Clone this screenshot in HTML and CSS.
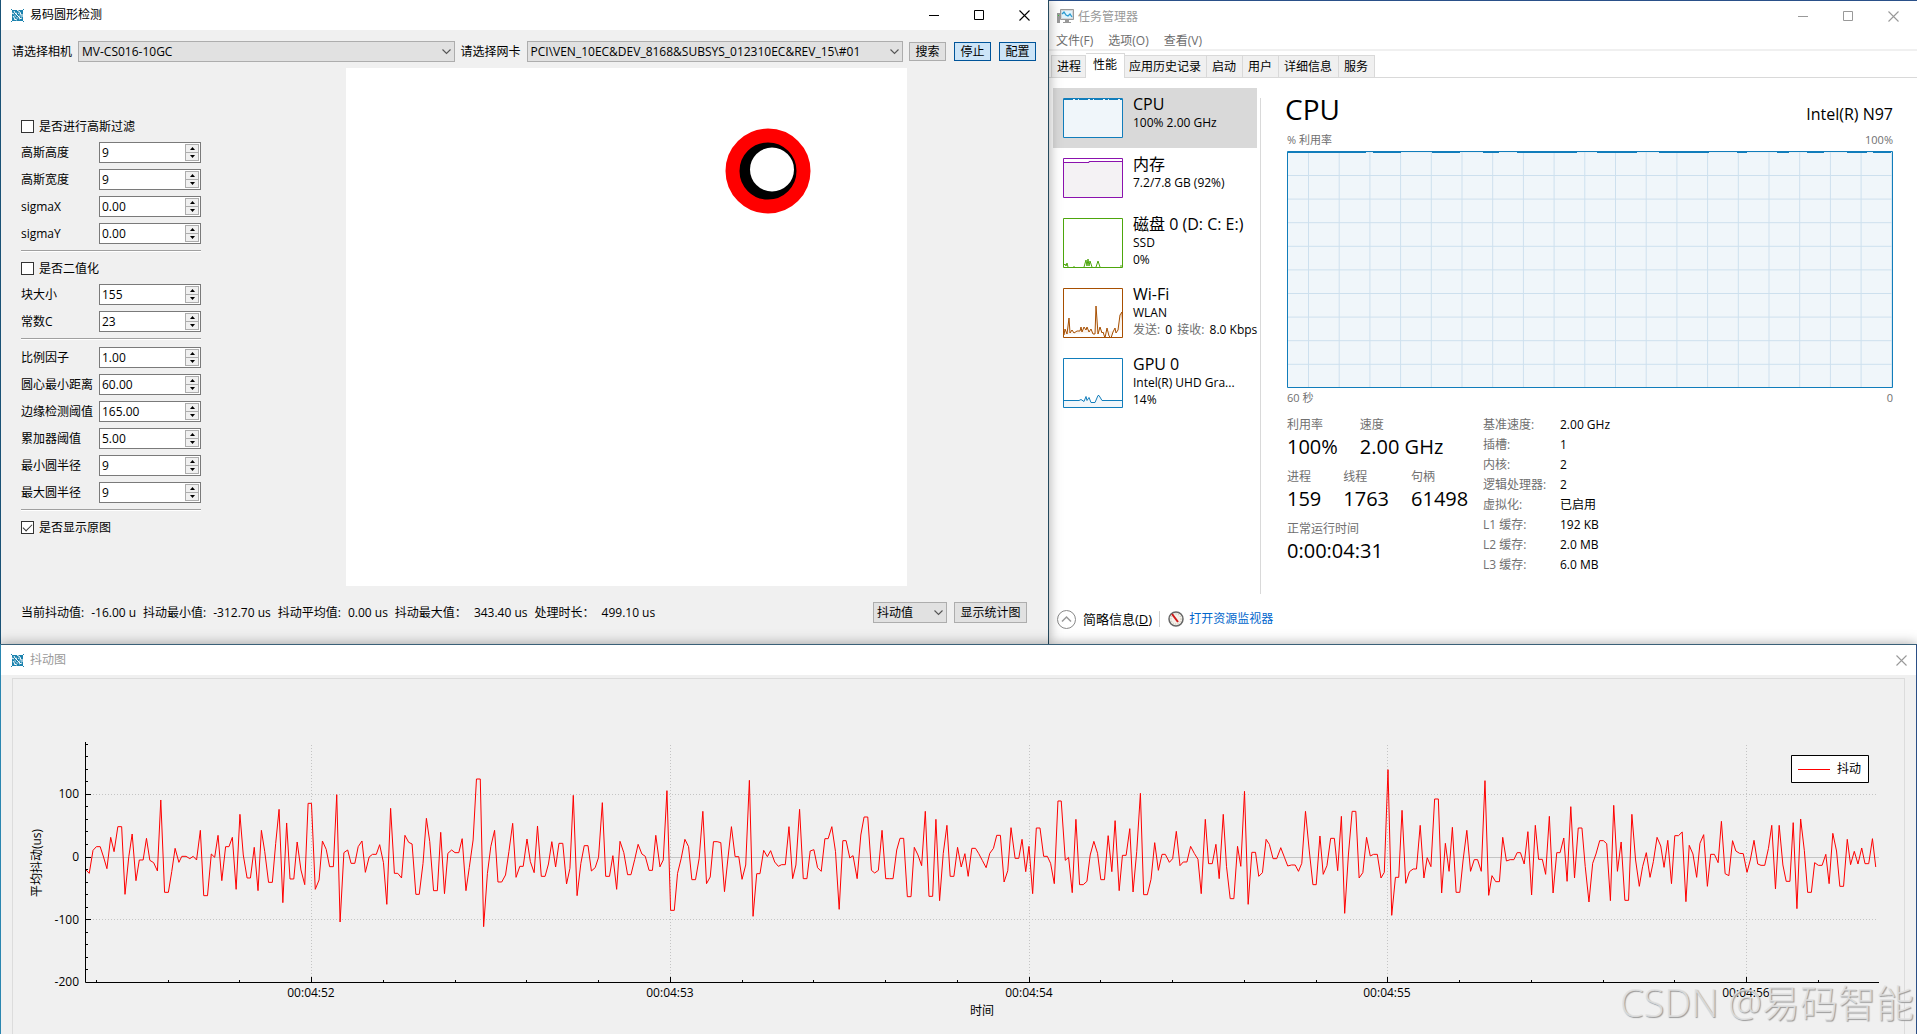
FILE: index.html
```html
<!DOCTYPE html>
<html lang="zh-CN">
<head>
<meta charset="utf-8">
<title>易码圆形检测</title>
<link rel="stylesheet" href="styles.css">
</head>
<body>
<svg width="0" height="0" class="defs" aria-hidden="true">
  <symbol id="logo" viewBox="0 0 13 13">
    <path d="M1 1h11v11H1z" fill="#1b82ae"/>
    <path d="M0 0l2 2M13 0l-2 2M0 13l2-2M13 13l-2-2" stroke="#1b82ae"/>
    <path d="M3 2l1 2M6 1l3 2M2 7l2 3M9 3l1 3M11 5v3M3 10l3 1M8 10l3-1M1 4l2 1" stroke="#fff"/>
    <circle cx="6.500" cy="6.500" r="2.500" fill="none" stroke="#e8f5fa" stroke-dasharray="2 1"/>
    <path d="M4 4l5 5" stroke="#fff"/>
  </symbol>
  <symbol id="min" viewBox="0 0 11 11"><path d="M0 5.500h10" stroke="currentColor"/></symbol>
  <symbol id="max" viewBox="0 0 11 11"><path d="M.5.5h9v9h-9z" fill="none" stroke="currentColor"/></symbol>
  <symbol id="close" viewBox="0 0 11 11"><path d="M.5.5l10 10M10.500.5l-10 10" stroke="currentColor" stroke-width="1.100"/></symbol>
  <symbol id="chevron" viewBox="0 0 9 6"><path d="M.5.5l4 4 4-4" fill="none" stroke="#555" stroke-width="1.100"/></symbol>
  <symbol id="up" viewBox="0 0 5 3"><path d="M0 3l2.500-3L5 3z"/></symbol>
  <symbol id="down" viewBox="0 0 5 3"><path d="M0 0l2.500 3L5 0z"/></symbol>
</svg>

<div class="desktop">
  <section class="window detector">
    <header class="titlebar">
      <svg class="logo"><use href="#logo"/></svg>
      <h1>易码圆形检测</h1>
      <div class="controls">
        <button aria-label="最小化"><svg><use href="#min"/></svg></button>
        <button aria-label="最大化"><svg><use href="#max"/></svg></button>
        <button aria-label="关闭"><svg><use href="#close"/></svg></button>
      </div>
    </header>
    <div class="toolbar">
      <label for="camera">请选择相机</label>
      <div class="combo wide"><select id="camera"><option>MV-CS016-10GC</option></select><svg><use href="#chevron"/></svg></div>
      <label for="nic">请选择网卡</label>
      <div class="combo wide"><select id="nic"><option>PCI\VEN_10EC&amp;DEV_8168&amp;SUBSYS_012310EC&amp;REV_15\#01</option></select><svg><use href="#chevron"/></svg></div>
      <div class="actions">
        <button class="push">搜索</button>
        <button class="push active">停止</button>
        <button class="push active">配置</button>
      </div>
    </div>
    <div class="workspace">
      <form class="params">
        <label class="check"><input type="checkbox">是否进行高斯过滤</label>
        <div class="field"><label for="p1">高斯高度</label><div class="spin"><input id="p1" value="9"><div class="steps"><button type="button" aria-label="增加"><svg><use href="#up"/></svg></button><button type="button" aria-label="减少"><svg><use href="#down"/></svg></button></div></div></div>
        <div class="field"><label for="p2">高斯宽度</label><div class="spin"><input id="p2" value="9"><div class="steps"><button type="button" aria-label="增加"><svg><use href="#up"/></svg></button><button type="button" aria-label="减少"><svg><use href="#down"/></svg></button></div></div></div>
        <div class="field"><label for="p3">sigmaX</label><div class="spin"><input id="p3" value="0.00"><div class="steps"><button type="button" aria-label="增加"><svg><use href="#up"/></svg></button><button type="button" aria-label="减少"><svg><use href="#down"/></svg></button></div></div></div>
        <div class="field"><label for="p4">sigmaY</label><div class="spin"><input id="p4" value="0.00"><div class="steps"><button type="button" aria-label="增加"><svg><use href="#up"/></svg></button><button type="button" aria-label="减少"><svg><use href="#down"/></svg></button></div></div></div>
        <hr>
        <label class="check"><input type="checkbox">是否二值化</label>
        <div class="field"><label for="p5">块大小</label><div class="spin"><input id="p5" value="155"><div class="steps"><button type="button" aria-label="增加"><svg><use href="#up"/></svg></button><button type="button" aria-label="减少"><svg><use href="#down"/></svg></button></div></div></div>
        <div class="field"><label for="p6">常数C</label><div class="spin"><input id="p6" value="23"><div class="steps"><button type="button" aria-label="增加"><svg><use href="#up"/></svg></button><button type="button" aria-label="减少"><svg><use href="#down"/></svg></button></div></div></div>
        <hr>
        <div class="field"><label for="p7">比例因子</label><div class="spin"><input id="p7" value="1.00"><div class="steps"><button type="button" aria-label="增加"><svg><use href="#up"/></svg></button><button type="button" aria-label="减少"><svg><use href="#down"/></svg></button></div></div></div>
        <div class="field"><label for="p8">圆心最小距离</label><div class="spin"><input id="p8" value="60.00"><div class="steps"><button type="button" aria-label="增加"><svg><use href="#up"/></svg></button><button type="button" aria-label="减少"><svg><use href="#down"/></svg></button></div></div></div>
        <div class="field"><label for="p9">边缘检测阈值</label><div class="spin"><input id="p9" value="165.00"><div class="steps"><button type="button" aria-label="增加"><svg><use href="#up"/></svg></button><button type="button" aria-label="减少"><svg><use href="#down"/></svg></button></div></div></div>
        <div class="field"><label for="p10">累加器阈值</label><div class="spin"><input id="p10" value="5.00"><div class="steps"><button type="button" aria-label="增加"><svg><use href="#up"/></svg></button><button type="button" aria-label="减少"><svg><use href="#down"/></svg></button></div></div></div>
        <div class="field"><label for="p11">最小圆半径</label><div class="spin"><input id="p11" value="9"><div class="steps"><button type="button" aria-label="增加"><svg><use href="#up"/></svg></button><button type="button" aria-label="减少"><svg><use href="#down"/></svg></button></div></div></div>
        <div class="field"><label for="p12">最大圆半径</label><div class="spin"><input id="p12" value="9"><div class="steps"><button type="button" aria-label="增加"><svg><use href="#up"/></svg></button><button type="button" aria-label="减少"><svg><use href="#down"/></svg></button></div></div></div>
        <hr>
        <label class="check"><input type="checkbox" checked>是否显示原图</label>
      </form>
      <svg class="preview" viewBox="0 0 561 518" role="img" aria-label="检测到的圆">
        <circle cx="422" cy="103" r="30"/>
        <circle cx="426" cy="101.500" r="22" fill="#fff"/>
        <circle cx="422" cy="103" r="35.500" fill="none" stroke="#f00" stroke-width="14"/>
      </svg>
    </div>
    <footer class="stats">
      <span>当前抖动值:</span><output>-16.00 u</output>
      <span>抖动最小值:</span><output>-312.70 us</output>
      <span>抖动平均值:</span><output>0.00 us</output>
      <span>抖动最大值：</span><output>343.40 us</output>
      <span>处理时长：</span><output>499.10 us</output>
      <div class="combo metric"><select aria-label="指标"><option>抖动值</option></select><svg><use href="#chevron"/></svg></div>
      <button class="push tall">显示统计图</button>
    </footer>
  </section>

  <section class="window taskmgr">
    <header class="titlebar inactive">
      <svg class="tm-icon" viewBox="0 0 17 15">
        <path d="M0 4h3v10H0z" fill="#999"/><path d="M1 6h1v1H1z" fill="#3c3"/>
        <path d="M3.500.5h13v10h-13z" fill="#d5d8da" stroke="#999"/>
        <path d="M5 2h10v7H5z" fill="#dff3fc"/>
        <path d="M5 5l2-2 2 3 2 1 2-2 2 3" fill="none" stroke="#2a9ad0" stroke-width="1.300"/>
        <path d="M8 11h4v2h2v1H6v-1h2z" fill="#999"/>
      </svg>
      <h1>任务管理器</h1>
      <div class="controls">
        <button aria-label="最小化"><svg><use href="#min"/></svg></button>
        <button aria-label="最大化"><svg><use href="#max"/></svg></button>
        <button aria-label="关闭"><svg><use href="#close"/></svg></button>
      </div>
    </header>
    <nav class="menu"><button>文件(F)</button><button>选项(O)</button><button>查看(V)</button></nav>
    <nav class="tabs">
      <button>进程</button><button class="current">性能</button><button>应用历史记录</button><button>启动</button><button>用户</button><button>详细信息</button><button>服务</button>
    </nav>
    <div class="perf">
      <ul class="resources">
        <li class="selected">
          <svg class="thumb" viewBox="0 0 60 40"><path d="M.5.5h59v39H.5z" fill="#f0f6fa" stroke="#117dbb"/><path d="M1 1.500h58" stroke="#117dbb" stroke-dasharray="9 2 3 1"/></svg>
          <div><h2>CPU</h2><p>100% 2.00 GHz</p></div>
        </li>
        <li>
          <svg class="thumb" viewBox="0 0 60 40"><path d="M1 4h25l1-1h32v36H1z" fill="#f4f2f4"/><path d="M1 4.500h25v-1h33" fill="none" stroke="#8b12ae"/><path d="M.5.5h59v39H.5z" fill="none" stroke="#8b12ae"/></svg>
          <div><h2>内存</h2><p>7.2/7.8 GB (92%)</p></div>
        </li>
        <li>
          <svg class="thumb" viewBox="0 0 60 50"><path d="M1 47l1-1 1 2 1-3 1 4M11 49v-1M21 49l2-7 1 6 1-7 1 7 1-5 2 6M33 49l2-6 2 6M57 48h2" fill="none" stroke="#4da60c"/><path d="M.5.5h59v49H.5z" fill="none" stroke="#4da60c"/></svg>
          <div><h2>磁盘 0 (D: C: E:)</h2><p>SSD</p><p>0%</p></div>
        </li>
        <li>
          <svg class="thumb" viewBox="0 0 60 50"><path d="M1 47l1-6 2 5 2-16 1 15 2-3 2 3 3-2h3l1-4 1 5 2-5 2 3 1-3 2 5 2-3 2 5h2l1-28 2 28 2-7 2 6 1-1 2 6 2-10 2 8 2 2 2-6 2-4 1 5 2-3 2-15 2-3 1 18" fill="#faf3ec" stroke="#a74f01"/><path d="M.5.5h59v49H.5z" fill="none" stroke="#a74f01"/></svg>
          <div><h2>Wi-Fi</h2><p>WLAN</p><p><i>发送:</i> 0 <i>接收:</i> 8.0 Kbps</p></div>
        </li>
        <li>
          <svg class="thumb" viewBox="0 0 60 50"><path d="M1 42.500h15l2-1 3 2 2-5 1 4 2-3 2 5h4l3-7h1l3 5h21v7H1z" fill="#f1f6fa"/><path d="M1 42.500h15l2-1 3 2 2-5 1 4 2-3 2 5h4l3-7h1l3 5h21" fill="none" stroke="#117dbb"/><path d="M.5.5h59v49H.5z" fill="none" stroke="#117dbb"/></svg>
          <div><h2>GPU 0</h2><p>Intel(R) UHD Gra...</p><p>14%</p></div>
        </li>
      </ul>
      <div class="detail">
        <div class="headline"><h2>CPU</h2><span>Intel(R) N97</span></div>
        <div class="scale"><span>% 利用率</span><span>100%</span></div>
        <svg class="usage" viewBox="0 0 606 237" preserveAspectRatio="none">
          <defs><pattern id="grid" x="21" y="24" width="30.700" height="23.600" patternUnits="userSpaceOnUse"><path d="M.5 24V.5H31" fill="none" stroke="#cde0ee"/></pattern></defs>
          <path d="M.5.5h605v236H.5z" fill="#f0f6fa"/>
          <path d="M1 1h604v235H1z" fill="url(#grid)"/>
          <path d="M.5.5h605v236H.5z" fill="none" stroke="#117dbb"/>
          <path d="M1 1.500h78M86 1.500h28M145 1.500h28M196 1.500h16M230 1.500h60M310 1.500h40M372 1.500h50M450 1.500h10M490 1.500h12M520 1.500h17M560 1.500h20M586 1.500h18" stroke="#117dbb"/>
        </svg>
        <div class="scale"><span>60 秒</span><span>0</span></div>
        <div class="figures">
          <div class="big">
            <div><dl><dt>利用率</dt><dd>100%</dd></dl><dl><dt>速度</dt><dd>2.00 GHz</dd></dl></div>
            <div><dl><dt>进程</dt><dd>159</dd></dl><dl><dt>线程</dt><dd>1763</dd></dl><dl><dt>句柄</dt><dd>61498</dd></dl></div>
            <div><dl><dt>正常运行时间</dt><dd>0:00:04:31</dd></dl></div>
          </div>
          <table class="specs">
            <tr><th>基准速度:</th><td>2.00 GHz</td></tr>
            <tr><th>插槽:</th><td>1</td></tr>
            <tr><th>内核:</th><td>2</td></tr>
            <tr><th>逻辑处理器:</th><td>2</td></tr>
            <tr><th>虚拟化:</th><td>已启用</td></tr>
            <tr><th>L1 缓存:</th><td>192 KB</td></tr>
            <tr><th>L2 缓存:</th><td>2.0 MB</td></tr>
            <tr><th>L3 缓存:</th><td>6.0 MB</td></tr>
          </table>
        </div>
      </div>
    </div>
    <footer class="tm-footer">
      <button class="fewer"><svg viewBox="0 0 19 19"><circle cx="9.500" cy="9.500" r="9" fill="none" stroke="#888"/><path d="M5 11.500l4.500-4.500 4.500 4.500" fill="none" stroke="#999" stroke-width="1.500"/></svg><span>简略信息(<u>D</u>)</span></button>
      <a href="#monitor"><svg viewBox="0 0 16 16"><circle cx="8" cy="8" r="7" fill="#f4f0ea" stroke="#666" stroke-width="1.500"/><circle cx="8" cy="8" r="5" fill="none" stroke="#bba" stroke-dasharray="1 1.500"/><path d="M4 3l6 8" stroke="#d01818" stroke-width="2"/></svg>打开资源监视器</a>
    </footer>
  </section>

  <section class="window jitter">
    <header class="titlebar inactive">
      <svg class="logo"><use href="#logo"/></svg>
      <h1>抖动图</h1>
      <div class="controls"><button aria-label="关闭"><svg><use href="#close"/></svg></button></div>
    </header>
    <div class="plot">
      <svg viewBox="13 679 1891 355" role="img" aria-label="抖动曲线">
        <path d="M90 794.500H1878M90 919.500H1878M311.500 745V982M670.500 745V982M1029.500 745V982M1387.500 745V982M1746.500 745V982" fill="none" stroke="#c4c4c4" stroke-dasharray="1 2"/>
        <path d="M86 857.500H1879" stroke="#c4c4c4"/>
        <g fill="none" stroke="#f00">
          <polyline vector-effect="non-scaling-stroke" transform="translate(0 720) scale(.42092 .33333)" points="203,448 212,460 221,391 229,380 238,380 246,411 254,446 263,352 271,395 280,320 289,320 297,523 306,410 314,342 323,482 331,420 340,420 348,355 356,421 365,428 374,453 382,240 391,517 400,517 408,455 416,385 425,427 432,409 442,409 451,416 459,409 467,420 476,331 484,527 493,527 502,402 510,412 518,346 527,482 536,380 544,380 552,352 561,508 570,283 578,405 587,474 595,474 604,382 613,512 621,331 629,395 638,487 647,487 655,370 663,268 672,548 681,309 689,477 698,477 706,366 715,450 724,494 732,250 740,250 749,508 758,480 766,363 775,388 783,440 792,440 800,224 808,606 817,398 826,390 834,430 843,430 851,380 860,363 868,457 877,411 885,403 894,403 902,374 911,428 919,553 928,265 937,460 945,460 954,474 962,346 971,367 979,372 988,523 996,523 1005,430 1013,295 1021,365 1030,512 1039,512 1047,337 1056,521 1064,400 1073,390 1081,398 1090,398 1098,356 1107,512 1115,442 1124,360 1132,177 1141,177 1149,620 1158,460 1166,380 1175,331 1183,486 1192,486 1201,465 1209,395 1218,310 1226,472 1235,439 1243,439 1252,357 1260,425 1269,458 1277,318 1286,469 1295,469 1303,432 1311,365 1320,441 1328,370 1337,370 1346,492 1354,445 1362,226 1371,527 1380,430 1388,377 1397,377 1405,453 1414,443 1422,412 1431,248 1439,469 1448,469 1456,407 1465,508 1473,364 1482,398 1491,464 1499,464 1508,418 1516,373 1525,402 1533,409 1542,451 1550,451 1558,346 1568,441"/>
          <polyline vector-effect="non-scaling-stroke" transform="translate(640 740) scale(.40816 .33333)" points="49,380 57,360 66,152 75,511 84,511 92,400 101,355 110,298 119,320 127,419 136,419 145,355 154,214 163,431 172,411 180,305 189,305 198,308 207,455 215,360 224,260 233,350 242,350 250,418 259,375 268,121 277,529 286,401 294,401 303,331 312,350 320,332 330,366 339,379 347,374 356,374 365,260 374,416 382,375 391,208 400,416 409,416 417,333 426,329 435,383 444,394 453,296 461,296 470,260 479,335 488,508 497,302 505,302 514,354 522,347 532,416 541,285 549,231 558,231 567,391 575,399 584,391 593,271 602,416 611,416 620,416 629,330 637,295 646,295 655,470 664,470 672,322 681,345 690,377 699,214 708,469 717,469 725,238 734,482 743,340 752,256 760,409 769,409 778,322 787,381 796,341 804,409 813,325 822,325 830,341 839,362 848,383 857,340 866,325 874,286 883,286 892,426 901,392 909,263 919,355 928,355 936,298 945,395 953,319 962,461 971,264 980,264 989,349 998,349 1006,370 1015,431 1024,183 1032,183 1042,361 1050,352 1059,458 1068,238 1077,434 1086,434 1095,424 1103,345 1112,304 1121,340 1129,419 1138,419 1147,287 1156,395 1164,242 1174,452 1182,346 1191,346 1200,266 1208,456 1217,335 1226,160 1234,464 1243,464 1252,418 1261,308 1270,391 1279,343 1287,343 1297,367 1305,356 1314,274 1323,377 1331,366 1340,366 1349,319 1358,340 1367,358 1375,461 1385,238 1393,371 1402,371 1411,313 1419,416 1429,223 1437,380 1446,476 1455,476 1464,319 1472,379 1481,154 1490,493 1499,337 1508,337 1516,409 1525,398 1534,298 1542,313 1551,356 1560,356 1570,323"/>
          <polyline vector-effect="non-scaling-stroke" transform="translate(1270 720) scale(.41263 .33333)" points="26,383 35,412 43,438 52,435 61,435 69,454 77,430 86,274 95,390 104,494 112,494 121,348 129,463 138,437 147,355 156,355 164,452 173,289 181,580 190,405 199,274 208,274 216,474 225,458 234,352 243,408 251,403 260,403 269,474 277,457 286,149 295,586 304,472 312,472 320,271 329,490 338,455 347,447 355,447 364,316 373,474 381,413 390,440 399,237 408,237 416,519 425,370 434,454 442,322 451,517 460,517 468,420 477,331 486,454 495,419 503,419 512,454 521,182 530,526 538,467 547,485 556,485 564,352 573,423 582,419 591,419 599,398 607,398 616,432 625,335 634,525 643,316 651,418 660,418 668,463 677,289 686,519 695,398 703,398 712,354 720,484 729,260 738,474 747,324 756,324 764,440 773,546 782,430 790,402 799,362 808,362 816,371 825,542 833,256 842,454 851,366 860,541 869,541 877,283 886,420 895,499 903,440 912,398 921,472 929,425 938,352 947,378 955,442 964,361 973,491 981,347 990,347 999,336 1008,545 1016,376 1025,402 1034,472 1042,370 1051,344 1060,499 1068,403 1077,403 1086,428 1094,304 1103,461 1112,467 1121,362 1129,393 1138,400 1147,401 1156,457 1164,420 1173,361 1182,432 1190,436 1199,436 1208,385 1216,316 1225,507 1234,316 1243,435 1251,484 1260,484 1268,308 1277,566 1286,297 1295,392 1303,517 1312,517 1320,428 1329,436 1338,436 1347,403 1355,491 1364,340 1373,393 1381,499 1390,499 1399,358 1407,434 1416,394 1425,432 1434,384 1442,431 1451,431 1460,356 1468,441"/>
        </g>
        <path d="M85.500 742V982.500H1879" fill="none" stroke="#000"/>
        <path d="M86 794.500h5M86 857.500h5M86 919.500h5M311.500 982v-5M670.500 982v-5M1029.500 982v-5M1387.500 982v-5M1746.500 982v-5" stroke="#000"/>
        <path d="M86 744.500h2M86 756.500h2M86 769.500h2M86 781.500h2M86 806.500h2M86 819.500h2M86 831.500h2M86 844.500h2M86 869.500h2M86 882.500h2M86 894.500h2M86 907.500h2M86 932.500h2M86 944.500h2M86 957.500h2M86 969.500h2M96.500 982v-2M168.500 982v-2M239.500 982v-2M383.500 982v-2M455.500 982v-2M526.500 982v-2M598.500 982v-2M742.500 982v-2M813.500 982v-2M885.500 982v-2M957.500 982v-2M1100.500 982v-2M1172.500 982v-2M1244.500 982v-2M1316.500 982v-2M1459.500 982v-2M1531.500 982v-2M1603.500 982v-2M1674.500 982v-2M1818.500 982v-2" stroke="#000"/>
        <g text-anchor="end"><text x="79" y="798">100</text><text x="79" y="861">0</text><text x="79" y="924">-100</text><text x="79" y="986">-200</text></g>
        <g text-anchor="middle">
          <text x="311" y="997">00:04:52</text><text x="670" y="997">00:04:53</text><text x="1029" y="997">00:04:54</text><text x="1387" y="997">00:04:55</text><text x="1746" y="997">00:04:56</text>
          <text x="982" y="1015">时间</text>
          <text transform="translate(41 863) rotate(-90)">平均抖动(us)</text>
        </g>
        <path d="M1791.500 755.500h77v27h-77z" fill="#fff" stroke="#000"/>
        <path d="M1798 769.500h32" stroke="#f00"/>
        <text x="1837" y="773">抖动</text>
      </svg>
      <div class="watermark">CSDN @易码智能</div>
    </div>
  </section>
</div>
</body>
</html>
```
FILE: styles.css
```css
* { box-sizing: border-box; margin: 0; padding: 0; }
body {
  font: 12px/16px "Open Sans", "Noto Sans CJK SC", sans-serif;
  color: #000;
  background: #fff;
  overflow: hidden;
}
.defs { position: absolute; }
button, input, select { font: inherit; color: inherit; }
button { background: none; border: 0; }
h1, h2 { font-weight: 400; }

.desktop {
  display: grid;
  grid-template-columns: 1049fr 868fr;
  min-height: 100vh;
  grid-template-rows: auto 1fr;
}
.window { position: relative; min-width: 0; }

/* Title bars */
.titlebar { display: flex; align-items: center; height: 30px; background: #fff; padding-left: 10px; }
.titlebar h1 { font-size: 12px; margin-left: 6px; flex: 1; }
.titlebar.inactive { color: #999; }
.logo { width: 13px; height: 13px; }
.controls { display: flex; }
.controls button { width: 45px; height: 28px; display: grid; place-items: center; }
.controls svg { width: 11px; height: 11px; }

/* Circle detection window */
.detector {
  background: #f0f0f0;
  border-left: 1px solid #1a5276;
  border-right: 1px solid #24485c;
  box-shadow: 0 0 12px rgba(0, 0, 0, .35);
  z-index: 1;
}
.detector .controls { padding-right: 1px; }
.detector .controls button { height: 26px; }
.toolbar { display: flex; align-items: center; gap: 6px; padding: 11px 12px 6px 11px; }
.combo { position: relative; height: 21px; }
.combo.wide { flex: 1; }
.combo select {
  appearance: none;
  width: 100%;
  height: 21px;
  padding: 0 20px 0 3px;
  border: 1px solid #adadad;
  border-radius: 0;
  background: #e1e1e1;
}
.combo svg { position: absolute; right: 4px; top: 8px; width: 9px; height: 6px; pointer-events: none; }
.combo.metric { width: 74px; margin-left: auto; }
.actions { display: flex; gap: 8px; }
.push { width: 37px; height: 19px; line-height: 17px; border: 1px solid #adadad; background: #e1e1e1; }
.push.active { border-color: #005499; background: #cce4f7; }
.push.tall { width: 73px; height: 21px; line-height: 19px; }

.workspace { display: grid; grid-template-columns: 325fr 561fr 141fr; padding-left: 20px; }
.params { display: grid; gap: 6px; align-content: start; width: 180px; padding-top: 49px; }
.check { display: flex; align-items: center; gap: 5px; height: 19px; }
.check input { appearance: none; width: 13px; height: 13px; border: 1px solid #333; background: #fff; }
.check input:checked::before {
  content: "";
  display: block;
  width: 8px;
  height: 4px;
  margin: 2px 1px;
  border: solid #333;
  border-width: 0 0 1px 1px;
  transform: rotate(-45deg);
}
.field { display: grid; grid-template-columns: 78px 102px; align-items: center; height: 21px; white-space: nowrap; }
.spin { display: flex; height: 21px; border: 1px solid #7a7a7a; background: #fff; padding: 1px; }
.spin input { flex: 1; min-width: 0; border: 0; outline: 0; background: none; padding-left: 1px; }
.steps { display: grid; width: 14px; grid-template-rows: 1fr 1fr; }
.steps button { border: 1px solid #adadad; background: #f0f0f0; display: grid; place-items: center; }
.steps button + button { border-top: 0; }
.steps svg { width: 5px; height: 3px; }
hr { height: 3px; border: 0; border-top: 1px solid #a0a0a0; background: linear-gradient(#fff 1px, transparent 1px); }
.preview { width: 100%; display: block; background: #fff; }
.stats { display: flex; align-items: center; gap: 7px; padding: 16px 21px 21px 20px; white-space: nowrap; }

/* Task manager */
.taskmgr { display: flex; flex-direction: column; border-top: 1px solid #2a5089; background: #fff; }
.taskmgr .titlebar { height: 31px; padding-left: 8px; }
.taskmgr .titlebar h1 { margin-left: 4px; }
.taskmgr .controls { padding-right: 1px; }
.taskmgr .controls button { height: 29px; }
.tm-icon { width: 17px; height: 15px; }
.menu { display: flex; gap: 15px; height: 19px; padding-left: 7px; border-bottom: 2px solid #f0f0f0; color: #6d6d6d; }
.tabs { display: flex; align-items: end; height: 27px; padding-left: 2px; border-bottom: 1px solid #d9d9d9; }
.tabs button { height: 22px; padding: 0 6px 0 5px; border: 1px solid #d9d9d9; border-width: 1px 1px 0 0; background: #f0f0f0; }
.tabs button:first-child { border-left-width: 1px; padding: 0 4px 0 5px; }
.tabs .current { height: 25px; padding: 0 7px 2px; margin-bottom: -1px; background: #fff; }
.tabs .current + button { padding: 0 5px 0 4px; }
.perf { display: flex; flex: 1; padding: 10px 24px 0 4px; }
.resources { list-style: none; width: 207px; flex: none; }
.resources li { display: flex; gap: 10px; width: 204px; padding: 10px; white-space: nowrap; }
.resources .selected { background: #d9d9d9; }
.resources li div { height: 0; }
.resources h2 { font-size: 16px; line-height: 20px; margin-top: -4px; }
.resources p { line-height: 17px; }
.resources i { font-style: normal; color: #707070; margin-right: 2px; }
.resources i + i { margin-left: 2px; }
.thumb { width: 60px; flex: none; background: #fff; display: block; }
.detail { flex: 1; min-width: 0; margin-top: 10px; padding-left: 26px; border-left: 1px solid #d9d9d9; }
.headline { display: flex; justify-content: space-between; align-items: center; height: 36px; margin-top: -6px; }
.headline h2 { font-size: 28px; line-height: 34px; padding-bottom: 2px; margin-left: -2px; }
.headline span { font-size: 16px; line-height: 20px; padding-top: 8px; }
.scale { display: flex; justify-content: space-between; font-size: 11px; line-height: 16px; padding: 4px 0 3px; color: #707070; }
.usage { display: block; width: 100%; height: 237px; }
.usage + .scale { padding: 2px 0 9px; }
.figures { display: flex; }
.big { width: 196px; display: grid; gap: 6px; align-content: start; white-space: nowrap; }
.big > div { display: flex; gap: 22px; }
.big dt { line-height: 20px; color: #707070; }
.big dd { font-size: 20px; line-height: 24px; padding-bottom: 2px; }
.specs { border-collapse: collapse; align-self: flex-start; }
.specs th { width: 77px; font-weight: 400; text-align: left; color: #707070; }
.specs td, .specs th { height: 20px; line-height: 20px; white-space: nowrap; }
.tm-footer { display: flex; align-items: center; height: 50px; padding-left: 8px; }
.fewer { display: flex; align-items: center; gap: 7px; font-size: 13px; white-space: nowrap; }
.fewer svg { width: 19px; height: 19px; }
.tm-footer a { display: flex; align-items: center; gap: 5px; margin-left: 7px; padding-left: 8px; border-left: 1px solid #d0d0d0; color: #0066cc; text-decoration: none; }
.tm-footer a svg { width: 16px; height: 16px; }

/* Jitter chart window */
.jitter {
  grid-column: 1 / -1;
  z-index: 2;
  background: #f0f0f0;
  border: 1px solid #3a6078;
  border-left-color: #2a86b0;
  border-right-color: #2b4f86;
  border-bottom: 0;
  box-shadow: 0 0 12px rgba(0, 0, 0, .35);
}
.jitter .controls button { width: 30px; }
.plot { position: relative; margin: 3px 11px 0; border: 1px solid #dcdcdc; border-bottom: 0; }
.plot svg { display: block; width: 100%; }
.plot text { font-size: 12px; }
.watermark {
  position: absolute;
  right: -10px;
  bottom: 6px;
  font: 38px/52px "Open Sans", "Noto Sans CJK SC", sans-serif;
  font-weight: 300;
  color: rgba(225, 225, 225, .85);
  text-shadow: 1px 1px 1px #999;
}
```
